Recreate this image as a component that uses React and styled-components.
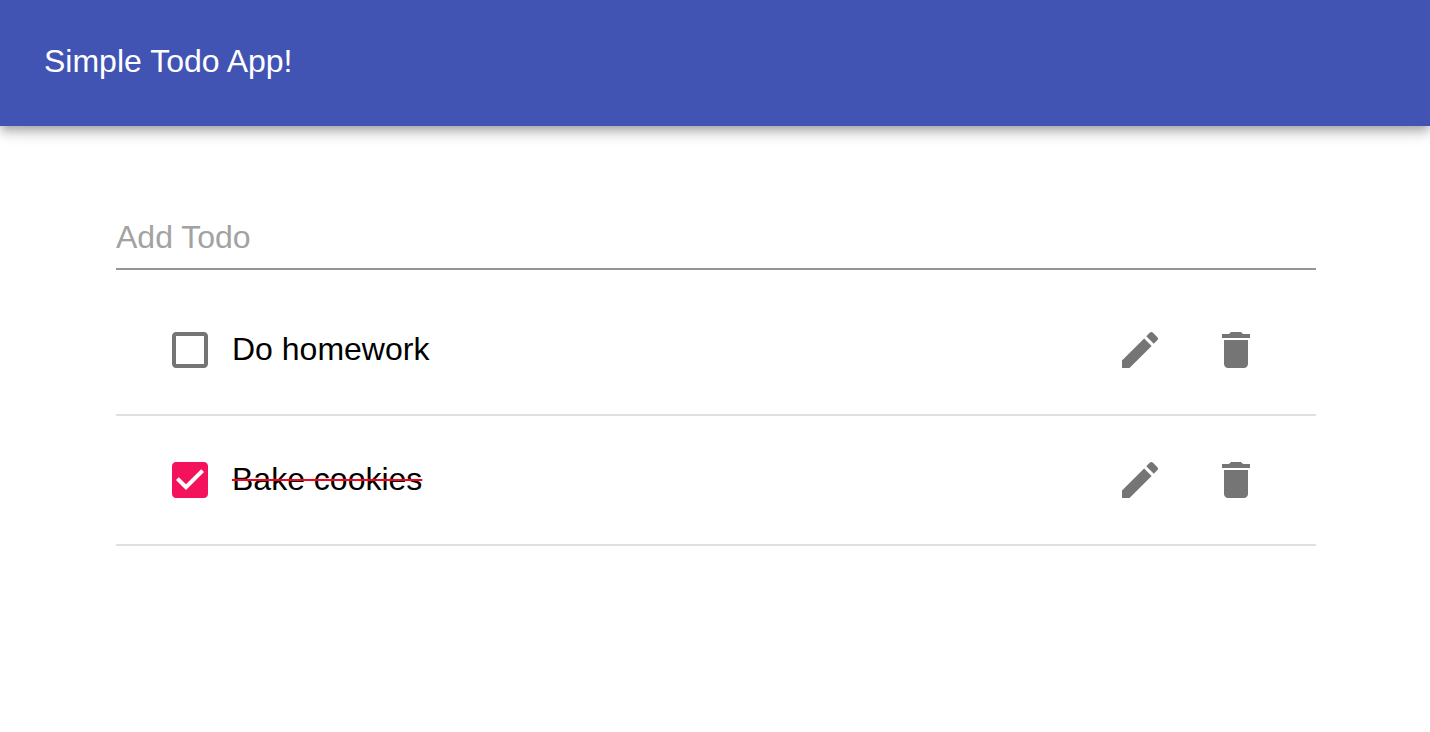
import React, { useState } from "react";
import styled, { createGlobalStyle } from "styled-components";

const GlobalStyle = createGlobalStyle`
  *, *::before, *::after { box-sizing: border-box; }
  body {
    margin: 0;
    background: #fff;
    color: #000;
    font-family: "Liberation Sans", Helvetica, Arial, sans-serif;
    font-size: 32px;
  }
`;

const AppBar = styled.header`
  padding: 37px 44px 41px;
  background: #4154b3;
  color: #fff;
  box-shadow:
    0 4px 8px -2px rgba(0, 0, 0, 0.2),
    0 8px 10px 0 rgba(0, 0, 0, 0.14),
    0 2px 20px 0 rgba(0, 0, 0, 0.12);
`;

const Title = styled.h1`
  margin: 0;
  font-size: 32px;
  font-weight: 400;
  line-height: 48px;
`;

const Main = styled.main`
  padding: 80px 114px 0 116px;
`;

const TodoInput = styled.input`
  display: block;
  width: 100%;
  height: 64px;
  padding: 12px 0;
  border: 0;
  border-bottom: 2px solid #949494;
  background: none;
  color: #000;
  font: inherit;
  line-height: 38px;
  outline: none;

  &::placeholder {
    color: #a2a2a2;
    opacity: 1;
  }
`;

const List = styled.ul`
  margin: 16px 0 0;
  padding: 0;
  list-style: none;
`;

const Item = styled.li`
  display: flex;
  align-items: center;
  height: 130px;
  padding: 0 32px;
  border-bottom: 2px solid #e0e0e0;
`;

const ItemLabel = styled.label`
  display: flex;
  flex: 1;
  align-items: center;
  cursor: pointer;
`;

const CheckArea = styled.span`
  display: grid;
  place-items: center;
  width: 84px;
  height: 84px;
  color: ${({ $checked }) => ($checked ? "#f5125c" : "#757575")};

  > * { grid-area: 1 / 1; }
`;

const CheckInput = styled.input`
  width: 48px;
  height: 48px;
  margin: 0;
  opacity: 0;
  cursor: pointer;
`;

const ItemText = styled.span`
  padding-bottom: 2px;
  line-height: 48px;
  text-decoration: ${({ $done }) => ($done ? "line-through 2px #ff0018" : "none")};
`;

const IconButton = styled.button`
  display: grid;
  place-items: center;
  width: 96px;
  height: 96px;
  padding: 0;
  border: 0;
  border-radius: 50%;
  background: none;
  color: #757575;
  cursor: pointer;
`;

const Icon = styled.svg`
  width: 48px;
  height: 48px;
  fill: currentColor;
  pointer-events: none;
`;

const paths = {
  unchecked:
    "M19 5v14H5V5h14m0-2H5c-1.1 0-2 .9-2 2v14c0 1.1.9 2 2 2h14c1.1 0 2-.9 2-2V5c0-1.1-.9-2-2-2z",
  checked:
    "M19 3H5c-1.11 0-2 .9-2 2v14c0 1.1.89 2 2 2h14c1.11 0 2-.9 2-2V5c0-1.1-.89-2-2-2zm-9 14l-5-5 1.41-1.41L10 14.17l7.59-7.59L19 8l-9 9z",
  edit:
    "M3 17.25V21h3.75L17.81 9.94l-3.75-3.75L3 17.25zM20.71 7.04c.39-.39.39-1.02 0-1.41l-2.34-2.34c-.39-.39-1.02-.39-1.41 0l-1.83 1.83 3.75 3.75 1.83-1.83z",
  remove:
    "M6 19c0 1.1.9 2 2 2h8c1.1 0 2-.9 2-2V7H6v12zM19 4h-3.5l-1-1h-5l-1 1H5v2h14V4z",
};

function Glyph({ name }) {
  return (
    <Icon viewBox="0 0 24 24" aria-hidden="true">
      <path d={paths[name]} />
    </Icon>
  );
}

function TodoItem({ todo, onToggle, onRemove }) {
  return (
    <Item>
      <ItemLabel>
        <CheckArea $checked={todo.done}>
          <CheckInput type="checkbox" checked={todo.done} onChange={onToggle} />
          <Glyph name={todo.done ? "checked" : "unchecked"} />
        </CheckArea>
        <ItemText $done={todo.done}>{todo.text}</ItemText>
      </ItemLabel>
      <IconButton type="button" aria-label="Edit">
        <Glyph name="edit" />
      </IconButton>
      <IconButton type="button" aria-label="Delete" onClick={onRemove}>
        <Glyph name="remove" />
      </IconButton>
    </Item>
  );
}

export default function App() {
  const [draft, setDraft] = useState("");
  const [todos, setTodos] = useState([
    { id: 1, text: "Do homework", done: false },
    { id: 2, text: "Bake cookies", done: true },
  ]);

  const addTodo = (event) => {
    event.preventDefault();
    if (!draft.trim()) return;
    setTodos([...todos, { id: Date.now(), text: draft.trim(), done: false }]);
    setDraft("");
  };

  const toggle = (id) =>
    setTodos(todos.map((t) => (t.id === id ? { ...t, done: !t.done } : t)));

  const remove = (id) => setTodos(todos.filter((t) => t.id !== id));

  return (
    <>
      <GlobalStyle />
      <AppBar>
        <Title>Simple Todo App!</Title>
      </AppBar>
      <Main>
        <form onSubmit={addTodo}>
          <TodoInput
            type="text"
            aria-label="Add Todo"
            placeholder="Add Todo"
            value={draft}
            onChange={(event) => setDraft(event.target.value)}
          />
        </form>
        <List>
          {todos.map((todo) => (
            <TodoItem
              key={todo.id}
              todo={todo}
              onToggle={() => toggle(todo.id)}
              onRemove={() => remove(todo.id)}
            />
          ))}
        </List>
      </Main>
    </>
  );
}
